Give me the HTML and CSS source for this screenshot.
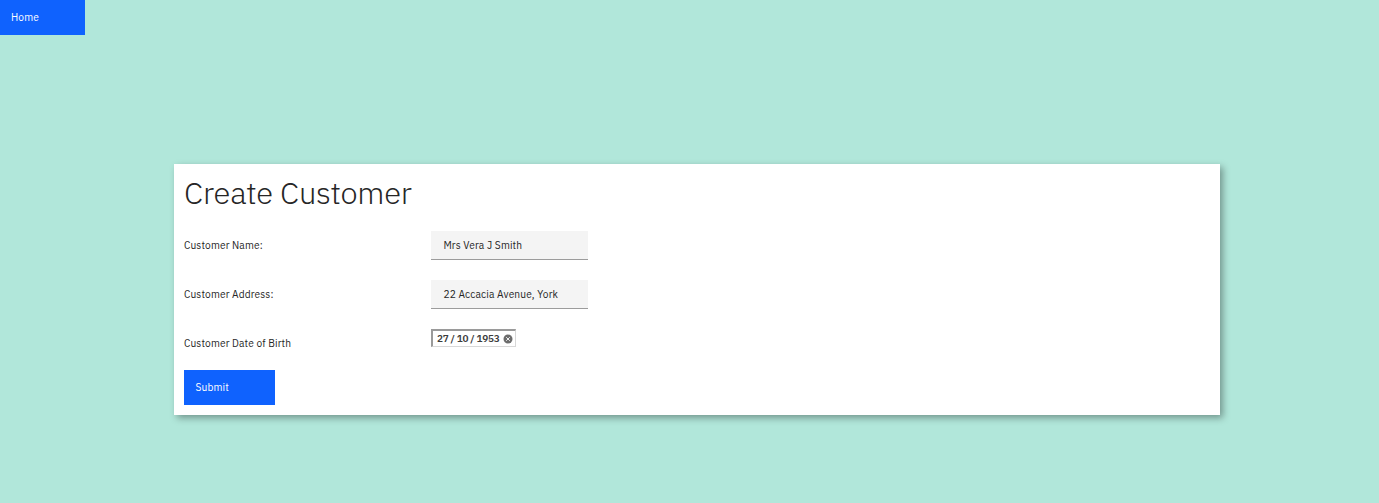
FILE: index.html
```
<!DOCTYPE html>
<html lang="en">
<head>
<meta charset="utf-8">
<title>Create Customer</title>
<link rel="stylesheet" href="styles.css">
</head>
<body>
<nav><a class="button home"><span class="home-text">Home</span></a></nav>
<main class="card">
<h1><span class="title-text">Create Customer</span></h1>
<form>
<div class="row"><label><span class="name-label">Customer Name:</span></label><div class="field"><span class="name-value">Mrs Vera J Smith</span></div></div>
<div class="row"><label><span class="address-label">Customer Address:</span></label><div class="field"><span class="address-value">22 Accacia Avenue, York</span></div></div>
<div class="row date-row"><label><span class="birth-label">Customer Date of Birth</span></label><div class="date"><span class="date-value">27 / 10 / 1953</span><svg class="clear" viewBox="0 0 10 10"><circle cx="5" cy="5" r="4.5" fill="#6c6c6c"/><path d="M3.2 3.2 6.8 6.8M6.8 3.2 3.2 6.8" stroke="#fff" stroke-width=".9"/></svg></div></div>
<div class="button submit"><span class="submit-text">Submit</span></div>
</form>
</main>
</body>
</html>
```
FILE: styles.css
```
* { box-sizing: border-box; }
body { margin: 0; height: 503px; overflow: hidden; background: #b1e7da; color: #262626; font: 10.2px/14px "IBM Plex Sans", "Noto Sans", sans-serif; letter-spacing: .13px; }
nav { height: 163.6px; }
span { white-space: nowrap; }
.button { display: flex; align-items: center; width: 85px; height: 35px; padding-left: 11px; background: #0f62fe; color: #fff; }
.card { width: 1046.5px; height: 251.4px; margin-left: 173.5px; padding: 0 10.5px; background: #fff; box-shadow: 3px 3px 7px rgba(0,0,0,.35); }
h1 { height: 67px; margin: 0; padding-top: 9px; font: 300 31px/40px "IBM Plex Sans", "Open Sans", sans-serif; letter-spacing: -.25px; }
.row { display: flex; height: 49.2px; }
label { width: 247.4px; padding-top: 8.2px; }
.field { width: 156.6px; height: 29px; padding: 8.2px 12px 0; background: #f4f4f4; border-bottom: 1px solid #9c9c9c; }
.date-row { height: 41px; }
.date { display: flex; align-items: center; width: 85px; height: 17.5px; padding-left: 3.6px; margin-top: .5px; border: 2px solid; border-color: #9a9a9a #d8d8d8 #d8d8d8 #9a9a9a; border-right-width: 1px; border-bottom-width: 1px; color: #3c3c3c; font-size: 10px; font-weight: 600; letter-spacing: -.27px; }
.clear { flex: none; width: 10px; height: 10px; margin-left: 3.5px; }
.submit { width: 91px; padding: 1px 0 0 11.5px; }
```
